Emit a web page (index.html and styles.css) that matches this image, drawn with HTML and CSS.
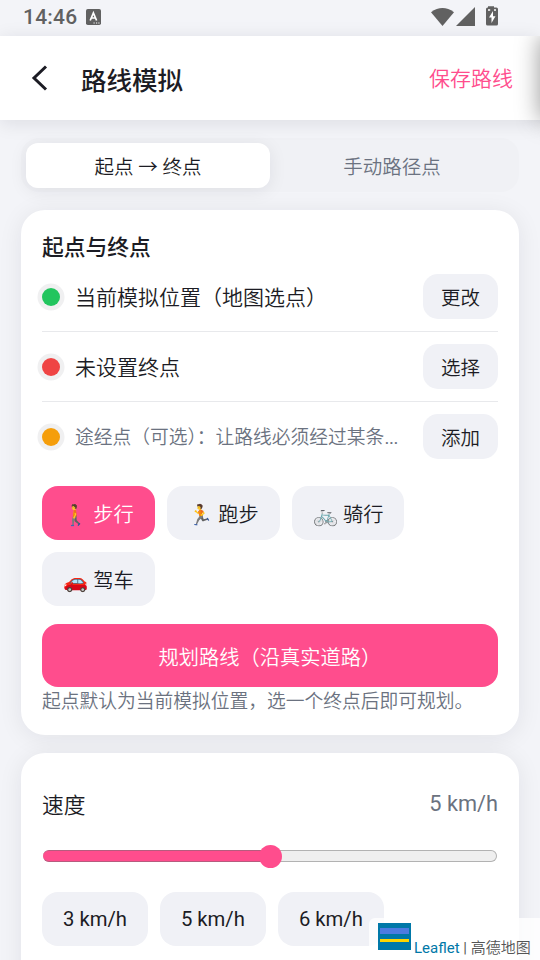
FILE: index.html
```html
<!DOCTYPE html>
<html lang="zh-CN">
<head>
<meta charset="utf-8">
<title>路线模拟</title>
<link rel="stylesheet" href="styles.css">
</head>
<body>
<div class="screen">
  <div class="status">
    <span class="clock">14:46</span>
    <svg class="app-badge" viewBox="0 0 15 16"><rect width="15" height="16" rx="1.8" fill="#616161"/><path d="M4.2 11.5 7.4 4l3.2 7.5M5.3 9h4.2" fill="none" stroke="#fff" stroke-width="1.7"/><path d="M7.5 14h1.2M10 14h1.2M12.3 14h1.2" stroke="#fff" stroke-width="1.2"/></svg>
    <svg class="signals" viewBox="0 0 68 20"><path d="M0 5.2Q11.5-3.2 23 5.2L11.5 19z" fill="#616161"/><path d="M44 0v19H25z" fill="#616161"/><path d="M57 .5V-.8h6V.5h2.4q1.6 0 1.6 1.6v14.8q0 1.6-1.6 1.6H56.6q-1.6 0-1.6-1.6V2.1Q55 .5 56.600 .5z" fill="#616161"/><path d="M57 2.3h2.200v1.500h-2.200zM63 2.300h2v1.500h-2zM62 4l-4 6.500h2.500V16l4-6.800h-2.500z" fill="#fff"/></svg>
  </div>
  <header class="header">
    <svg class="back" viewBox="0 0 18 26"><path d="M16 1.500 4 13l12 11.500" fill="none" stroke="#1c1c24" stroke-width="3"/></svg>
    <h1>路线模拟</h1>
    <span class="save">保存路线</span>
  </header>
  <main>
    <div class="tabs">
      <div class="tab active">起点 → 终点</div>
      <div class="tab">手动路径点</div>
    </div>
    <section class="card">
      <h2>起点与终点</h2>
      <div class="row"><i class="dot green"></i><span class="place">当前模拟位置（地图选点）</span><button class="small">更改</button></div>
      <div class="row"><i class="dot red"></i><span class="place">未设置终点</span><button class="small">选择</button></div>
      <div class="row last"><i class="dot amber"></i><span class="place hint">途经点（可选）：让路线必须经过某条<span class="dots">...</span></span><button class="small">添加</button></div>
      <div class="chips modes">
        <button class="chip on">🚶 步行</button>
        <button class="chip">🏃 跑步</button>
        <button class="chip">🚲 骑行</button>
        <button class="chip">🚗 驾车</button>
      </div>
      <button class="plan">规划路线（沿真实道路）</button>
      <p class="note">起点默认为当前模拟位置，选一个终点后即可规划。</p>
    </section>
    <section class="card speed">
      <div class="speed-head"><span>速度</span><span class="value">5 km/h</span></div>
      <div class="slider"><div class="fill"></div><div class="thumb"></div><div class="rest"></div></div>
      <div class="chips">
        <button class="chip latin">3 km/h</button>
        <button class="chip latin">5 km/h</button>
        <button class="chip latin">6 km/h</button>
      </div>
    </section>
  </main>
  <div class="edge"><div class="drawer"></div></div>
  <div class="attribution">
    <svg class="flag" viewBox="0 0 33 27"><path fill="#0078a8" d="M0 0h33v27H0z"/><path fill="#4c7be1" d="M2 5h29v6H2z"/><path fill="#ffd500" d="M2 16h29v3H2z"/></svg>
    <span><a>Leaflet</a> | <span class="provider">高德地图</span></span>
  </div>
</div>
</body>
</html>
```
FILE: styles.css
```css
* { box-sizing: border-box; }
body { margin: 0; background: #f3f4f8; color: #1c1c24; font-family: Roboto, "Noto Sans CJK SC", sans-serif; font-weight: 350; }
.screen { position: relative; width: 540px; height: 960px; overflow: hidden; }
.status { display: flex; align-items: center; height: 36px; padding: 0 41px 2px 23px; color: #616161; }
.clock { font-size: 21px; font-weight: 500; letter-spacing: .2px; }
.app-badge { width: 15px; height: 16px; margin-left: 9px; }
.signals { width: 68px; height: 20px; margin-left: auto; overflow: visible; }
.header { position: relative; z-index: 1; display: flex; align-items: center; height: 84px; padding: 0 27px 0 30px; background: #fff; box-shadow: 0 3px 18px rgba(20, 20, 40, .1); }
.back { width: 18px; height: 26px; }
h1 { margin: 5px 0 0 33px; font-size: 25.500px; line-height: 36px; font-weight: 500; }
.save { margin: 2px 0 0 auto; color: #ff4d8d; font-size: 21px; line-height: 30px; }
main { padding: 18px 21px 0; }
.tabs { display: flex; height: 54px; padding: 5px 5px 4px; border-radius: 18px; background: #f0f1f5; font-size: 19.500px; }
.tab { display: flex; flex: 1; align-items: center; justify-content: center; color: #6b7280; border-radius: 12px; }
.tab.active { background: #fff; color: #1c1c24; box-shadow: 0 3px 18px rgba(20, 20, 40, .08); }
.card { margin-top: 18px; height: 525px; padding: 21px; border-radius: 24px; background: #fff; box-shadow: 0 3px 24px rgba(20, 20, 40, .08); }
h2 { margin: 0; height: 31px; padding-top: 1px; font-size: 21.750px; line-height: 32px; font-weight: 500; }
.row { display: flex; align-items: center; height: 70px; border-bottom: 1px solid #e8e9ec; }
.row.last { border-color: transparent; }
.dot { width: 18px; height: 18px; flex: none; border-radius: 50%; box-shadow: 0 0 0 4.500px #f0f0f1; }
.green { background: #22c55e; }
.red { background: #ef4444; }
.amber { background: #f59e0b; }
.place { flex: 1; min-width: 0; margin: -2px 20px 0 15px; font-size: 21px; white-space: nowrap; }
.hint { color: #6b7280; font-size: 18.750px; }
.dots { font-weight: 400; letter-spacing: -.4px; }
button { font-family: inherit; font-weight: inherit; border: 0; padding: 0; color: #1c1c24; background: #f0f1f6; }
.small { width: 75px; height: 45px; border-radius: 15px; font-size: 19.500px; }
.chips { display: flex; flex-wrap: wrap; gap: 12px; }
.modes { margin-top: 14px; }
.chip { height: 54px; padding: 0 21px; border-radius: 16px; font-size: 20.250px; white-space: nowrap; }
.modes .chip { width: 113px; padding-top: 1px; }
.modes .chip:nth-child(3) { width: 112px; }
.latin, .value, .attribution { font-weight: 400; }
.chip.on, .plan { color: #fff; background: #ff4d8d; }
.plan { display: block; width: 100%; height: 63px; margin-top: 18px; padding-top: 2px; border-radius: 16px; font-size: 20.250px; }
.note { margin: 0; padding-top: 1px; color: #6b7280; font-size: 18.750px; line-height: 28px; white-space: nowrap; }
.speed { padding-top: 37px; }
.speed-head { display: flex; justify-content: space-between; height: 31px; font-size: 21.750px; line-height: 32px; }
.value { color: #6b7280; line-height: 28px; }
.slider { display: flex; align-items: center; height: 24px; margin: 23px 1px 24px; }
.fill { width: 227px; height: 12px; margin-right: -11px; border: 1px solid #b65c7e; border-width: 1px 0; border-radius: 6px 0 0 6px; background: #ff4d8d; }
.thumb { width: 23px; height: 23px; z-index: 1; border-radius: 50%; background: #ff4d8d; }
.rest { flex: 1; height: 12px; margin-left: -12px; border: 1px solid #b2b2b2; border-left: 0; border-radius: 0 6px 6px 0; background: #efefef; }
.edge { position: absolute; z-index: 2; top: 36px; right: 0; width: 40px; height: 110px; overflow: hidden; }
.drawer { width: 40px; height: 84px; margin-left: 40px; box-shadow: 0 0 24px rgba(0, 0, 0, .4); }
.attribution { position: absolute; right: 0; bottom: 0; display: flex; width: 171px; height: 42px; padding: 5px 0 0 9px; border-radius: 6px 0 0; background: rgba(255, 255, 255, .8); color: #555; font-size: 15px; line-height: 20px; white-space: nowrap; }
.attribution > span { margin: 15px 0 0 3px; }
.attribution a { color: #0078a8; }
.provider { font-weight: 350; }
.flag { width: 33px; height: 27px; }
```
